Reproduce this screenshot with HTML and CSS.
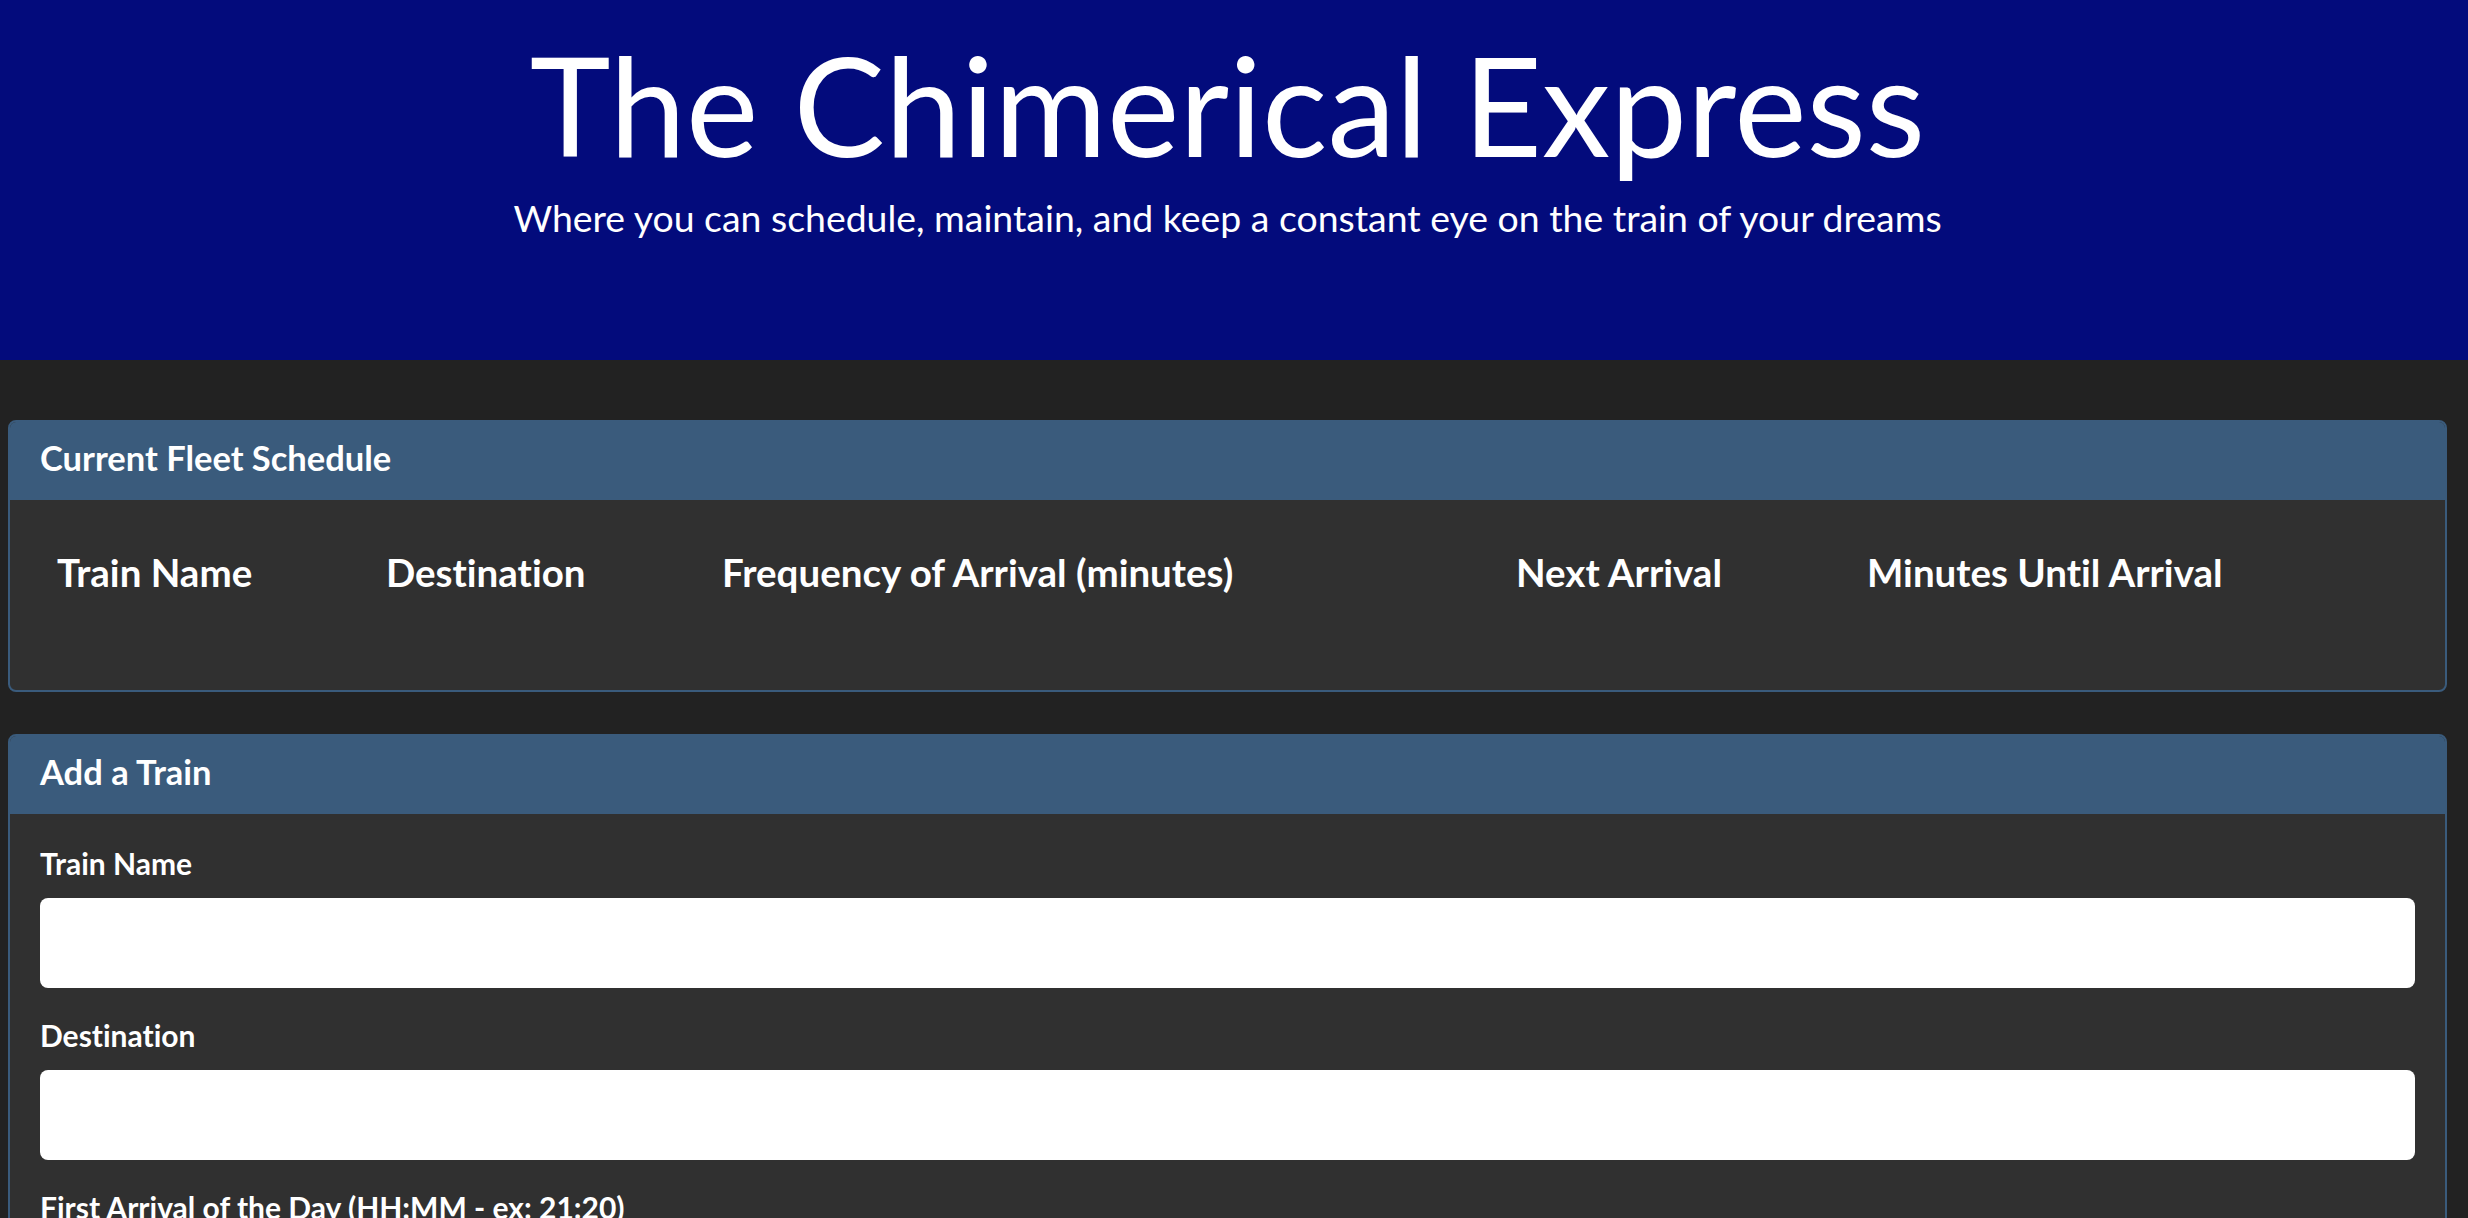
FILE: index.html
```html
<!DOCTYPE html>
<html lang="en">
<head>
<meta charset="utf-8">
<title>The Chimerical Express</title>
<link rel="stylesheet" href="styles.css">
</head>
<body>
<header class="jumbotron">
  <h1 class="title">The Chimerical Express</h1>
  <p class="lead">Where you can schedule, maintain, and keep a constant eye on the train of your dreams</p>
</header>
<main class="container">
  <section class="card schedule-card">
    <div class="card-header">Current Fleet Schedule</div>
    <div class="card-body">
      <table class="schedule">
        <colgroup>
          <col class="c-name">
          <col class="c-dest">
          <col class="c-freq">
          <col class="c-next">
          <col class="c-min">
        </colgroup>
        <thead>
          <tr>
            <th>Train Name</th>
            <th>Destination</th>
            <th>Frequency of Arrival (minutes)</th>
            <th>Next Arrival</th>
            <th>Minutes Until Arrival</th>
          </tr>
        </thead>
        <tbody></tbody>
      </table>
    </div>
  </section>
  <section class="card add-card">
    <div class="card-header">Add a Train</div>
    <div class="card-body">
      <form class="train-form">
        <div class="form-group">
          <label for="train-name">Train Name</label>
          <input id="train-name" type="text">
        </div>
        <div class="form-group">
          <label for="destination">Destination</label>
          <input id="destination" type="text">
        </div>
        <div class="form-group">
          <label for="first-time">First Arrival of the Day (HH:MM - ex: 21:20)</label>
          <input id="first-time" type="text">
        </div>
        <div class="form-group">
          <label for="frequency">Frequency (minutes)</label>
          <input id="frequency" type="text">
        </div>
        <button type="submit" class="btn">Submit</button>
      </form>
    </div>
  </section>
</main>
</body>
</html>
```
FILE: styles.css
```css
html, body {
  margin: 0;
  padding: 0;
}
body {
  background: #222222;
  color: #ffffff;
  font-family: Lato, "Open Sans", "Liberation Sans", sans-serif;
  font-variant-ligatures: no-common-ligatures;
}
.jumbotron {
  background: #030b7c;
  height: 360px;
  box-sizing: border-box;
  padding: 22px 21px 0 8px;
  text-align: center;
}
.title {
  margin: 0;
  font-size: 137px;
  font-weight: 400;
  line-height: 1.2;
}
.lead {
  margin: 4px 0 0;
  font-size: 37.4px;
  line-height: 1.5;
  font-weight: 400;
}
.container {
  padding: 60px 21px 0 8px;
}
.card {
  border: 2px solid #3a5b7c;
  border-radius: 8px;
  overflow: hidden;
  background: #303030;
}
.card + .card {
  margin-top: 42px;
}
.card-header {
  background: #3a5b7c;
  font-size: 34.5px;
  font-weight: 700;
  line-height: 48px;
  padding: 12px 30px 18px;
}
.card-body {
  padding: 28px 30px;
}
.schedule {
  width: 100%;
  table-layout: fixed;
  border-collapse: collapse;
  margin-bottom: 45px;
}
.c-name { width: 329px; }
.c-dest { width: 336px; }
.c-freq { width: 794px; }
.c-next { width: 351px; }
.schedule th {
  text-align: left;
  font-size: 38.5px;
  font-weight: 700;
  line-height: 57px;
  padding: 16px 17px;
  white-space: nowrap;
}
.form-group {
  margin-bottom: 26px;
}
.form-group label {
  display: block;
  font-size: 30px;
  font-weight: 700;
  line-height: 43px;
  margin-bottom: 13px;
}
.form-group input {
  display: block;
  box-sizing: border-box;
  width: 100%;
  height: 90px;
  border: none;
  border-radius: 8px;
  background: #ffffff;
  padding: 0 20px;
  font-family: inherit;
  font-size: 29px;
}
.btn {
  font-family: inherit;
  font-size: 29px;
  padding: 10px 24px;
  border-radius: 8px;
  border: none;
  background: #3a5b7c;
  color: #ffffff;
}
```
